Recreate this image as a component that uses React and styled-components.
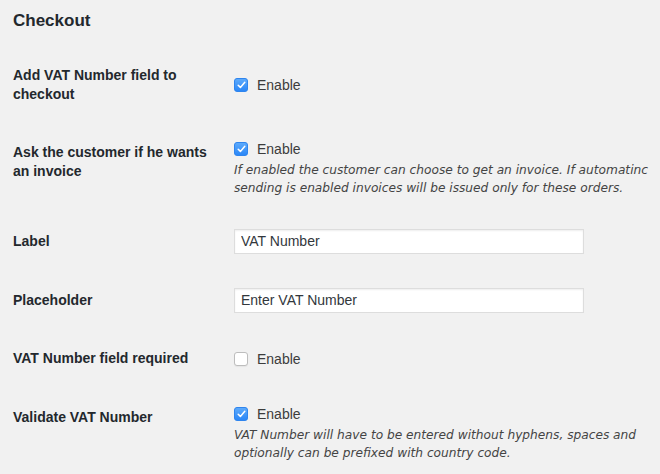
import React from "react";
import styled, { createGlobalStyle } from "styled-components";

const GlobalStyle = createGlobalStyle`
  html, body {
    margin: 0;
    padding: 0;
    background: #f1f1f1;
  }
  body {
    font-family: "Liberation Sans", Arial, sans-serif;
    font-size: 14px;
    color: #444;
  }
`;

const Container = styled.div`
  padding: 0 13px;
  width: 660px;
  box-sizing: border-box;
`;

const Title = styled.h2`
  margin: 10px 0 14px;
  font-size: 17px;
  line-height: 22px;
  font-weight: 700;
  color: #23282d;
`;

const FormTable = styled.table`
  border-collapse: collapse;
  table-layout: fixed;
  width: 100%;
`;

const Row = styled.tr``;

const LabelCell = styled.th`
  width: 211px;
  padding: 20px 0;
  text-align: left;
  vertical-align: top;
  font-size: 14px;
  line-height: 18.6px;
  font-weight: 700;
  color: #23282d;
`;

const FieldCell = styled.td`
  padding: 15px 0 15px 10px;
  vertical-align: middle;
  line-height: 18px;
`;

const CheckLabel = styled.label`
  display: flex;
  align-items: center;
  gap: 9px;
  height: 22px;
  font-size: 14px;
  color: #3c3c3c;
`;

const Box = styled.span`
  width: 14px;
  height: 14px;
  box-sizing: border-box;
  border-radius: 3px;
  display: flex;
  align-items: center;
  justify-content: center;
  background: ${(p) =>
    p.checked ? "linear-gradient(#5daafb, #2b87f7)" : "#fff"};
  border: 1px solid ${(p) => (p.checked ? "#2f85ee" : "#bdbdbd")};
  box-shadow: ${(p) => (p.checked ? "none" : "0 1px 1px rgba(0,0,0,0.05)")};
`;

const Description = styled.p`
  margin: 1px 0 0;
  width: 425px;
  font-family: "DejaVu Sans", "Liberation Sans", sans-serif;
  font-size: 12.2px;
  line-height: 18px;
  font-style: italic;
  color: #444;
`;

const TextInput = styled.input`
  width: 350px;
  height: 25px;
  box-sizing: border-box;
  border: 1px solid #ddd;
  box-shadow: inset 0 1px 2px rgba(0, 0, 0, 0.07);
  background: #fff;
  padding: 0 6px;
  font-family: "Liberation Sans", Arial, sans-serif;
  font-size: 14px;
  color: #32373c;
  outline: none;
  display: block;
`;

const Check = () => (
  <svg width="9" height="8" viewBox="0 0 9 8">
    <path
      d="M1.2 4.2 L3.4 6.4 L7.8 1.2"
      fill="none"
      stroke="#fff"
      strokeWidth="1.5"
      strokeLinecap="round"
      strokeLinejoin="round"
    />
  </svg>
);

const Checkbox = ({ checked, text }) => (
  <CheckLabel>
    <Box checked={checked}>{checked && <Check />}</Box>
    {text}
  </CheckLabel>
);

export default function App() {
  return (
    <Container>
      <GlobalStyle />
      <Title>Checkout</Title>
      <FormTable>
        <tbody>
          <Row>
            <LabelCell>Add VAT Number field to checkout</LabelCell>
            <FieldCell>
              <Checkbox checked text="Enable" />
            </FieldCell>
          </Row>
          <Row>
            <LabelCell>Ask the customer if he wants an invoice</LabelCell>
            <FieldCell>
              <Checkbox checked text="Enable" />
              <Description>
                If enabled the customer can choose to get an invoice. If
                automatinc sending is enabled invoices will be issued only for
                these orders.
              </Description>
            </FieldCell>
          </Row>
          <Row>
            <LabelCell>Label</LabelCell>
            <FieldCell>
              <TextInput defaultValue="VAT Number" />
            </FieldCell>
          </Row>
          <Row>
            <LabelCell>Placeholder</LabelCell>
            <FieldCell>
              <TextInput defaultValue="Enter VAT Number" />
            </FieldCell>
          </Row>
          <Row>
            <LabelCell>VAT Number field required</LabelCell>
            <FieldCell>
              <Checkbox text="Enable" />
            </FieldCell>
          </Row>
          <Row>
            <LabelCell>Validate VAT Number</LabelCell>
            <FieldCell>
              <Checkbox checked text="Enable" />
              <Description>
                VAT Number will have to be entered without hyphens, spaces and
                optionally can be prefixed with country code.
              </Description>
            </FieldCell>
          </Row>
        </tbody>
      </FormTable>
    </Container>
  );
}
